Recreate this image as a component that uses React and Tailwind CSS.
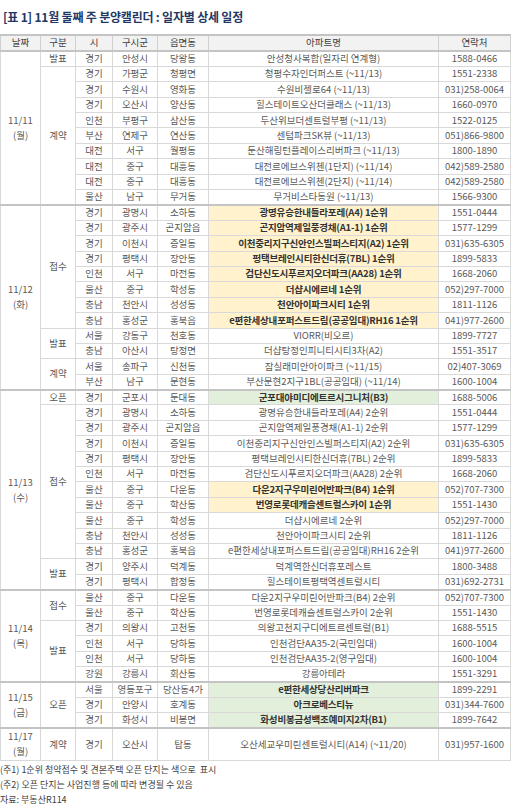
const groups = [
  {
    date: '11/11', day: '월',
    sections: [
      { type: '발표', rows: [
        ['경기', '안성시', '당왕동', '안성청사복합(일자리 연계형)', '1588-0466'],
      ] },
      { type: '계약', rows: [
        ['경기', '가평군', '청평면', '청평수자인더퍼스트 (~11/13)', '1551-2338'],
        ['경기', '수원시', '영화동', '수원비젤로64 (~11/13)', '031)258-0064'],
        ['경기', '오산시', '양산동', '힐스테이트오산더클래스 (~11/13)', '1660-0970'],
        ['인천', '부평구', '삼산동', '두산위브더센트럴부평 (~11/13)', '1522-0125'],
        ['부산', '연제구', '연산동', '센텀파크SK뷰 (~11/13)', '051)866-9800'],
        ['대전', '서구', '월평동', '둔산해링턴플레이스리버파크 (~11/13)', '1800-1890'],
        ['대전', '중구', '대흥동', '대전르에브스위첸(1단지) (~11/14)', '042)589-2580'],
        ['대전', '중구', '대흥동', '대전르에브스위첸(2단지) (~11/14)', '042)589-2580'],
        ['울산', '남구', '무거동', '무거비스타동원 (~11/13)', '1566-9300'],
      ] },
    ],
  },
  {
    date: '11/12', day: '화',
    sections: [
      { type: '접수', rows: [
        ['경기', '광명시', '소하동', '광명유승한내들라포레(A4) 1순위', '1551-0444', 'y'],
        ['경기', '광주시', '곤지암읍', '곤지암역제일풍경채(A1-1) 1순위', '1577-1299', 'y'],
        ['경기', '이천시', '증일동', '이천중리지구신안인스빌퍼스티지(A2) 1순위', '031)635-6305', 'y'],
        ['경기', '평택시', '장안동', '평택브레인시티한신더휴(7BL) 1순위', '1899-5833', 'y'],
        ['인천', '서구', '마전동', '검단신도시푸르지오더파크(AA28) 1순위', '1668-2060', 'y'],
        ['울산', '중구', '학성동', '더샵시에르네 1순위', '052)297-7000', 'y'],
        ['충남', '천안시', '성성동', '천안아이파크시티 1순위', '1811-1126', 'y'],
        ['충남', '홍성군', '홍북읍', 'e편한세상내포퍼스트드림(공공임대)RH16 1순위', '041)977-2600', 'y'],
      ] },
      { type: '발표', rows: [
        ['서울', '강동구', '천호동', 'VIORR(비오르)', '1899-7727'],
        ['충남', '아산시', '탕정면', '더샵탕정인피니티시티3차(A2)', '1551-3517'],
      ] },
      { type: '계약', rows: [
        ['서울', '송파구', '신천동', '잠실래미안아이파크 (~11/15)', '02)407-3069'],
        ['부산', '남구', '문현동', '부산문현2지구1BL(공공임대) (~11/14)', '1600-1004'],
      ] },
    ],
  },
  {
    date: '11/13', day: '수',
    sections: [
      { type: '오픈', rows: [
        ['경기', '군포시', '둔대동', '군포대야미디에트르시그니처(B3)', '1688-5006', 'g'],
      ] },
      { type: '접수', rows: [
        ['경기', '광명시', '소하동', '광명유승한내들라포레(A4) 2순위', '1551-0444'],
        ['경기', '광주시', '곤지암읍', '곤지암역제일풍경채(A1-1) 2순위', '1577-1299'],
        ['경기', '이천시', '증일동', '이천중리지구신안인스빌퍼스티지(A2) 2순위', '031)635-6305'],
        ['경기', '평택시', '장안동', '평택브레인시티한신더휴(7BL) 2순위', '1899-5833'],
        ['인천', '서구', '마전동', '검단신도시푸르지오더파크(AA28) 2순위', '1668-2060'],
        ['울산', '중구', '다운동', '다운2지구우미린어반파크(B4) 1순위', '052)707-7300', 'y'],
        ['울산', '중구', '학산동', '번영로롯데캐슬센트럴스카이 1순위', '1551-1430', 'y'],
        ['울산', '중구', '학성동', '더샵시에르네 2순위', '052)297-7000'],
        ['충남', '천안시', '성성동', '천안아이파크시티 2순위', '1811-1126'],
        ['충남', '홍성군', '홍북읍', 'e편한세상내포퍼스트드림(공공임대)RH16 2순위', '041)977-2600'],
      ] },
      { type: '발표', rows: [
        ['경기', '양주시', '덕계동', '덕계역한신더휴포레스트', '1800-3488'],
        ['경기', '평택시', '합정동', '힐스테이트평택역센트럴시티', '031)692-2731'],
      ] },
    ],
  },
  {
    date: '11/14', day: '목',
    sections: [
      { type: '접수', rows: [
        ['울산', '중구', '다운동', '다운2지구우미린어반파크(B4) 2순위', '052)707-7300'],
        ['울산', '중구', '학산동', '번영로롯데캐슬센트럴스카이 2순위', '1551-1430'],
      ] },
      { type: '발표', rows: [
        ['경기', '의왕시', '고천동', '의왕고천지구디에트르센트럴(B1)', '1688-5515'],
        ['인천', '서구', '당하동', '인천검단AA35-2(국민임대)', '1600-1004'],
        ['인천', '서구', '당하동', '인천검단AA35-2(영구임대)', '1600-1004'],
        ['강원', '강릉시', '회산동', '강릉아테라', '1551-3291'],
      ] },
    ],
  },
  {
    date: '11/15', day: '금',
    sections: [
      { type: '오픈', rows: [
        ['서울', '영등포구', '당산동4가', 'e편한세상당산리버파크', '1899-2291', 'g'],
        ['경기', '안양시', '호계동', '아크로베스티뉴', '031)344-7600', 'g'],
        ['경기', '화성시', '비봉면', '화성비봉금성백조예미지2차(B1)', '1899-7642', 'g'],
      ] },
    ],
  },
  {
    date: '11/17', day: '월', tall: true,
    sections: [
      { type: '계약', rows: [
        ['경기', '오산시', '탑동', '오산세교우미린센트럴시티(A14) (~11/20)', '031)957-1600'],
      ] },
    ],
  },
];

const headers = ['날짜', '구분', '시', '구시군', '읍면동', '아파트명', '연락처'];

export default function App() {
  return (
    <div className="w-[512px] bg-white text-[#595959]" style={{ fontFamily: '"Noto Sans CJK KR", "Noto Sans", sans-serif' }}>
      <div className="h-[34px] flex items-center pl-[3px] text-[12px] font-bold text-[#1f3864] tracking-[-0.2px]">
        [표 1] 11월 둘째 주 분양캘린더 : 일자별 상세 일정
      </div>

      <table className="w-[510px] border-collapse table-fixed text-[9.5px] leading-none">
        <colgroup>
          <col className="w-[40px]" />
          <col className="w-[35px]" />
          <col className="w-[37px]" />
          <col className="w-[45px]" />
          <col className="w-[51px]" />
          <col className="w-[230px]" />
          <col className="w-[72px]" />
        </colgroup>
        <thead>
          <tr className="h-[16px] bg-[#f2f2f2] text-[#404040]">
            {headers.map((h) => (
              <th key={h} className="font-normal p-0 border border-[#d0d0d0] border-t-2 border-t-[#c4c4c4] text-center">{h}</th>
            ))}
          </tr>
        </thead>
        <tbody>
          {groups.map((g) => {
            const total = g.sections.reduce((n, s) => n + s.rows.length, 0);
            return g.sections.map((s, si) =>
              s.rows.map((r, ri) => {
                const first = si === 0 && ri === 0;
                const cell = 'p-0 text-center whitespace-nowrap border border-[#d9d9d9] ' +
                  (first ? 'border-t-2 border-t-[#c4c4c4] ' : '');
                const hl = r[5] === 'y' ? 'bg-[#fff2cc] font-semibold text-[#333333] tracking-[-0.2px]' :
                  r[5] === 'g' ? 'bg-[#e2efda] font-semibold text-[#333333] tracking-[-0.2px]' : '';
                return (
                  <tr key={g.date + s.type + ri} className={g.tall ? 'h-[32px]' : 'h-[15.4px]'}>
                    {first && (
                      <td rowSpan={total} className={cell + 'leading-[15px]'}>
                        {g.date}<br />({g.day})
                      </td>
                    )}
                    {ri === 0 && (
                      <td rowSpan={s.rows.length} className={cell}>{s.type}</td>
                    )}
                    <td className={cell}>{r[0]}</td>
                    <td className={cell}>{r[1]}</td>
                    <td className={cell}>{r[2]}</td>
                    <td className={cell + hl}>{r[3]}</td>
                    <td className={cell}>{r[4]}</td>
                  </tr>
                );
              })
            );
          })}
        </tbody>
      </table>

      <div className="pt-[1px] text-[9px] leading-[15px] text-[#404040]">
        <p>(주1) 1순위 청약접수 및 견본주택 오픈 단지는 색으로 &nbsp;표시</p>
        <p>(주2) 오픈 단지는 사업진행 등에 따라 변경될 수 있음</p>
        <p>자료: 부동산R114</p>
      </div>
    </div>
  );
}
